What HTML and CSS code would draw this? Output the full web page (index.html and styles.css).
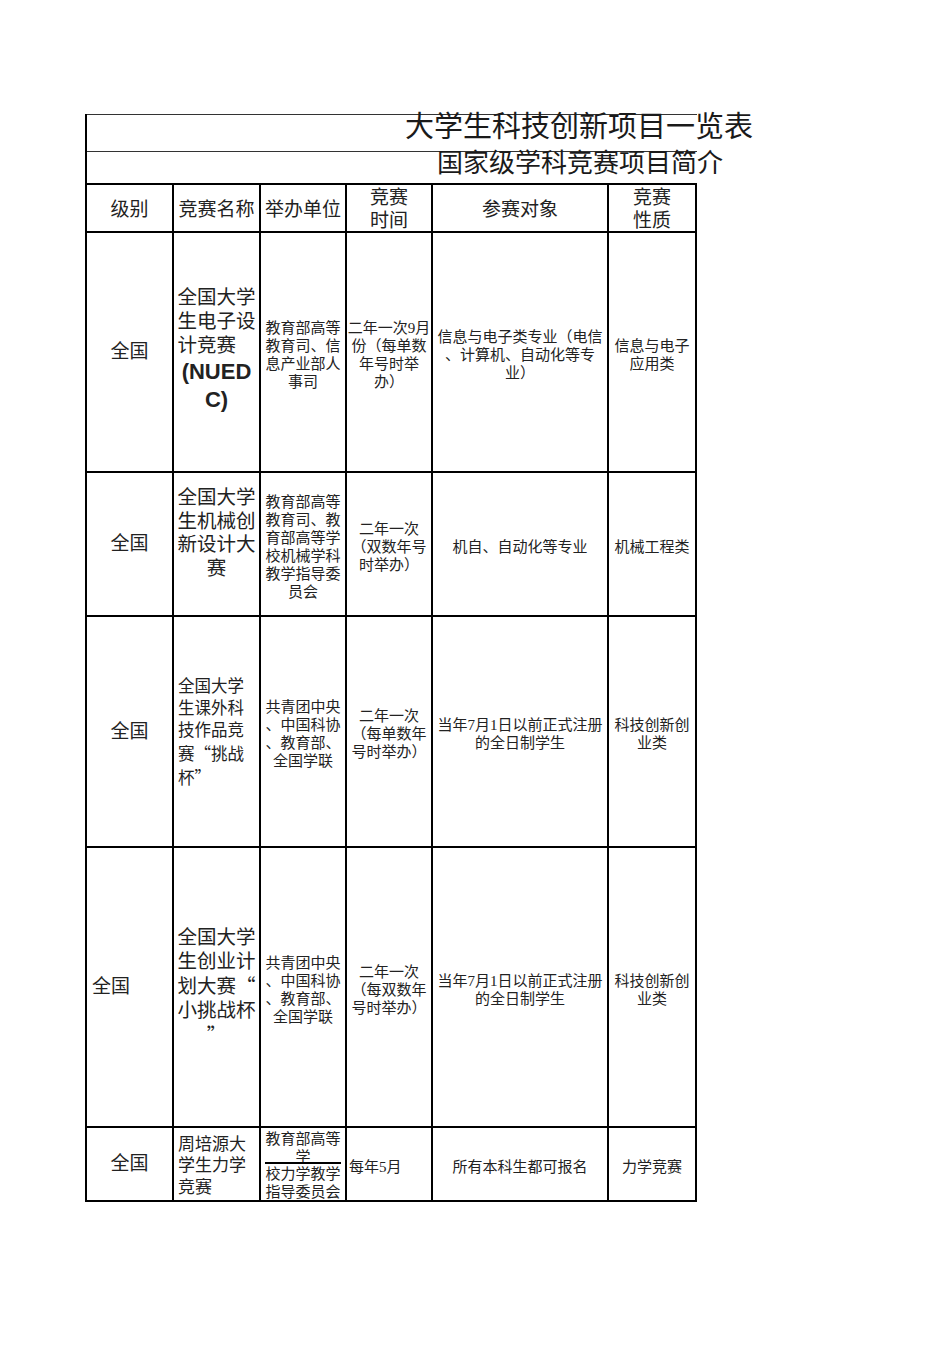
FILE: index.html
```html
<!DOCTYPE html>
<html lang="zh-CN">
<head>
<meta charset="utf-8">
<title>大学生科技创新项目一览表</title>
<link rel="stylesheet" href="styles.css">
</head>
<body>
<main class="page">
  <header class="titles">
    <div class="title-row t1"><h1>大学生科技创新项目一览表</h1></div>
    <div class="title-row t2"><h2>国家级学科竞赛项目简介</h2></div>
  </header>
  <section class="sheet">
    <div class="cell hd"><p>级别</p></div>
    <div class="cell hd"><p>竞赛名称</p></div>
    <div class="cell hd"><p>举办单位</p></div>
    <div class="cell hd"><p>竞赛<br>时间</p></div>
    <div class="cell hd"><p>参赛对象</p></div>
    <div class="cell hd"><p>竞赛<br>性质</p></div>

    <div class="cell lvl"><p>全国</p></div>
    <div class="cell big nuedc"><p>全国大学<br>生电子设<br><span class="l">计竞赛</span><span class="en">(NUED<br>C)</span></p></div>
    <div class="cell sm"><p>教育部高等<br>教育司、信<br>息产业部人<br>事司</p></div>
    <div class="cell sm"><p>二年一次9月<br>份（每单数<br>年号时举<br>办）</p></div>
    <div class="cell sm"><p>信息与电子类专业（电信<br>、计算机、自动化等专<br>业）</p></div>
    <div class="cell sm"><p>信息与电子<br>应用类</p></div>

    <div class="cell lvl"><p>全国</p></div>
    <div class="cell big raised"><p>全国大学<br>生机械创<br>新设计大<br>赛</p></div>
    <div class="cell sm"><p>教育部高等<br>教育司、教<br>育部高等学<br>校机械学科<br>教学指导委<br>员会</p></div>
    <div class="cell sm"><p>二年一次<br>（双数年号<br>时举办）</p></div>
    <div class="cell sm"><p>机自、自动化等专业</p></div>
    <div class="cell sm"><p>机械工程类</p></div>

    <div class="cell lvl"><p>全国</p></div>
    <div class="cell mid left"><p>全国大学<br>生课外科<br>技作品竞<br>赛<span class="q">“</span>挑战<br>杯<span class="q">”</span></p></div>
    <div class="cell sm"><p>共青团中央<br>、中国科协<br>、教育部、<br>全国学联</p></div>
    <div class="cell sm"><p>二年一次<br>（每单数年<br>号时举办）</p></div>
    <div class="cell sm"><p>当年7月1日以前正式注册<br>的全日制学生</p></div>
    <div class="cell sm"><p>科技创新创<br>业类</p></div>

    <div class="cell lvl left"><p>全国</p></div>
    <div class="cell big"><p>全国大学<br>生创业计<br>划大赛<span class="q">“</span><br>小挑战杯<br><span class="q">”</span></p></div>
    <div class="cell sm"><p>共青团中央<br>、中国科协<br>、教育部、<br>全国学联</p></div>
    <div class="cell sm"><p>二年一次<br>（每双数年<br>号时举办）</p></div>
    <div class="cell sm"><p>当年7月1日以前正式注册<br>的全日制学生</p></div>
    <div class="cell sm"><p>科技创新创<br>业类</p></div>

    <div class="cell lvl"><p>全国</p></div>
    <div class="cell mid left small-name"><p>周培源大<br>学生力学<br>竞赛</p></div>
    <div class="cell split">
      <div class="sub top"><p>教育部高等<br>学</p></div>
      <div class="sub bottom"><p>校力学教学<br>指导委员会</p></div>
    </div>
    <div class="cell sm left"><p>每年5月</p></div>
    <div class="cell sm"><p>所有本科生都可报名</p></div>
    <div class="cell sm"><p>力学竞赛</p></div>
  </section>
</main>
</body>
</html>
```

FILE: styles.css
```css
html, body {
  margin: 0;
  padding: 0;
  background: #ffffff;
}

body {
  font-family: "Liberation Serif", "Noto Sans CJK SC", serif;
  color: #222222;
}

p {
  margin: 0;
}

.page {
  padding: 114px 0 0 85px;
}

/* ---------- title rows ---------- */
.titles {
  width: 612px;
  box-sizing: border-box;
  border-left: 2px solid #000;
}

.title-row {
  box-sizing: border-box;
  border-top: 1px solid #333;
}

.t1 { height: 37px; }
.t2 { height: 32px; }

h1, h2 {
  font-weight: 400;
  text-align: right;
  white-space: nowrap;
  font-family: "Noto Sans CJK SC", sans-serif;
  color: #1a1a1a;
}

h1 {
  font-size: 29px;
  line-height: 29px;
  margin: -5px -56px 0 0;
}

h2 {
  font-size: 26px;
  line-height: 26px;
  margin: -4px -26px 0 0;
}

/* ---------- grid table ---------- */
.sheet {
  display: grid;
  grid-template-columns: 87px 87px 86px 86px 176px 88px;
  grid-template-rows: 48px 240px 144px 231px 280px 74px;
  width: max-content;
  border-left: 2px solid #000;
  border-top: 2px solid #000;
}

.cell {
  box-sizing: border-box;
  border-right: 2px solid #000;
  border-bottom: 2px solid #000;
  display: flex;
  flex-direction: column;
  justify-content: center;
  align-items: center;
  text-align: center;
  overflow: hidden;
  white-space: nowrap;
}

.cell.left {
  align-items: flex-start;
  text-align: left;
  padding-left: 4px;
}

.hd {
  font-size: 19px;
  line-height: 23px;
  padding-top: 2px;
}

.lvl {
  font-size: 19px;
  line-height: 24px;
}

.lvl.left {
  padding-left: 5px;
}

.big {
  font-size: 19.5px;
  line-height: 23.5px;
}

.big.raised {
  padding-bottom: 22px;
}

.nuedc {
  line-height: 24px;
  padding-bottom: 4px;
}

.nuedc .l {
  display: block;
  text-align: left;
}

.nuedc .en {
  display: block;
  font-family: "Liberation Sans", Arial, sans-serif;
  font-weight: 700;
  font-size: 22px;
  line-height: 28px;
}

.mid {
  font-size: 16.5px;
  line-height: 22px;
  padding-top: 3px;
}

.small-name {
  font-size: 17px;
  line-height: 21.5px;
  padding-top: 4px;
}

.sm {
  font-size: 15px;
  line-height: 18px;
  padding-top: 5px;
}

.sm.left {
  padding-left: 2px;
}

.q {
  font-family: "Noto Sans CJK SC", sans-serif;
}

/* split cell (last row, organiser) */
.split {
  display: grid;
  grid-template-rows: 36px 1fr;
  align-items: stretch;
  justify-items: stretch;
  font-size: 15px;
  line-height: 18px;
}

.sub {
  overflow: hidden;
  text-align: center;
}

.sub.top {
  border-bottom: 2px solid #000;
  padding-top: 2px;
}

.sub.bottom {
  padding-top: 1px;
}
```
